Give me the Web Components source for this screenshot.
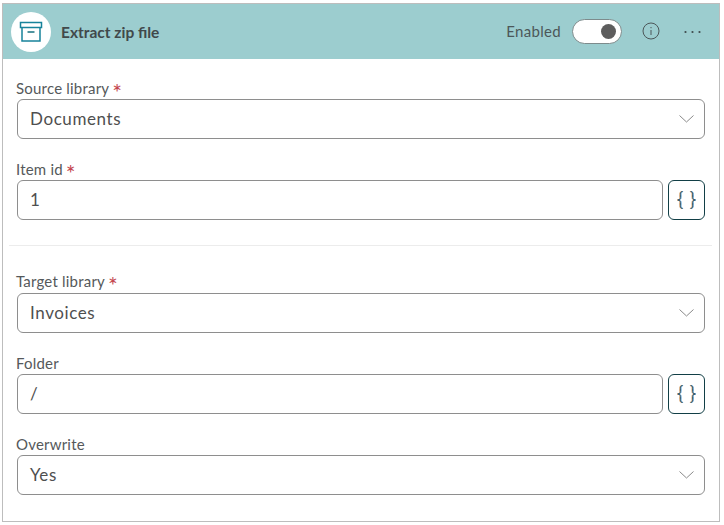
<!DOCTYPE html>
<html>
<head>
<meta charset="utf-8">
<style>
  html, body { margin: 0; background: #fff; }
  body { padding: 3px 0 0 2px; font-family: Lato, "Liberation Sans", sans-serif; color: #4a4a4a; }
</style>
</head>
<body>
<step-card title="Extract zip file">
  <form-field label="Source library" required style="--gap-top:20px"><select-box value="Documents"></select-box></form-field>
  <form-field label="Item id" required style="--gap-top:21px"><expr-input value="1"></expr-input></form-field>
  <field-divider></field-divider>
  <form-field label="Target library" required style="--gap-top:0px;--label-gap:1px"><select-box value="Invoices"></select-box></form-field>
  <form-field label="Folder" style="--gap-top:21px"><expr-input value="/"></expr-input></form-field>
  <form-field label="Overwrite" style="--gap-top:21px"><select-box value="Yes"></select-box></form-field>
</step-card>

<script>
class StepCard extends HTMLElement {
  constructor() {
    super();
    this.attachShadow({ mode: 'open' }).innerHTML = `
      <style>
        :host { display: block; width: 716px; height: 517px; border: 1px solid #bdbdbd; background: #fff; }
        header { height: 55px; background: #9ccdcf; display: flex; align-items: center; padding-left: 8px; padding-right: 18px; box-sizing: border-box; }
        .logo { width: 40px; height: 40px; border-radius: 50%; background: #fff; display: flex; align-items: center; justify-content: center; flex: none; }
        h1 { margin: 0 0 0 10px; font-size: 15.5px; font-weight: 700; color: #41494b; flex: 1; }
        .state { font-size: 15px; color: #4c5759; margin-right: 11px; letter-spacing: .3px; padding-bottom: 1px; }
        .toggle { width: 50px; height: 25px; box-sizing: border-box; border: 1px solid #7d8b8c; border-radius: 13px; background: #fff; display: flex; align-items: center; justify-content: flex-end; padding-right: 5px; }
        .knob { width: 15px; height: 15px; border-radius: 50%; background: #5d5d5d; }
        .info { margin-left: 20px; display: block; margin-top: -1px; }
        .more { margin-left: 24px; display: block; }
        main { padding: 0 13px; }
      </style>
      <header>
        <span class="logo">
          <svg width="24" height="22" viewBox="0 0 24 22" fill="none">
            <path d="M1.5 1.5H22.5V6.5H1.5Z" stroke="#17839b" stroke-width="1.5"/>
            <path d="M3 6.5V20H21V6.5" stroke="#17839b" stroke-width="1.5"/>
            <path d="M8.5 11H15.5" stroke="#16707f" stroke-width="1.5"/>
          </svg>
        </span>
        <h1></h1>
        <span class="state">Enabled</span>
        <span class="toggle"><span class="knob"></span></span>
        <svg class="info" width="18" height="18" viewBox="0 0 18 18" fill="none" stroke="#4c5759">
          <circle cx="9" cy="9" r="8" stroke-width="1"/>
          <path d="M9 8V13" stroke-width="1"/>
          <path d="M9 5V6.2" stroke-width="1"/>
        </svg>
        <svg class="more" width="17" height="4" viewBox="0 0 17 4" fill="#3f4a4c">
          <circle cx="1.5" cy="2" r="1.1"/><circle cx="8.5" cy="2" r="1.1"/><circle cx="15.5" cy="2" r="1.1"/>
        </svg>
      </header>
      <main><slot></slot></main>`;
  }
  connectedCallback() {
    this.shadowRoot.querySelector('h1').textContent = this.getAttribute('title');
    this.removeAttribute('title');
  }
}
customElements.define('step-card', StepCard);

class FormField extends HTMLElement {
  constructor() {
    super();
    this.attachShadow({ mode: 'open' }).innerHTML = `
      <style>
        :host { display: block; padding-top: var(--gap-top, 20px); }
        label { display: block; height: 20px; margin-bottom: var(--label-gap, 0); line-height: 18px; font-size: 15px; color: #55595b; letter-spacing: .2px; }
        .req { color: #c4474f; margin-left: 3px; font-size: 23px; line-height: 14px; vertical-align: -7px; }
      </style>
      <label></label>
      <div><slot></slot></div>`;
  }
  connectedCallback() {
    const label = this.shadowRoot.querySelector('label');
    label.textContent = this.getAttribute('label');
    if (this.hasAttribute('required')) {
      const star = document.createElement('span');
      star.className = 'req';
      star.textContent = '*';
      label.appendChild(star);
    }
  }
}
customElements.define('form-field', FormField);

const boxCss = `
  .box { height: 40px; box-sizing: border-box; border: 1px solid #8e8e8e; border-radius: 6px; background: #fff;
         display: flex; align-items: center; padding: 0 10px 2px 12px; font-size: 17px; color: #4f4f4f; letter-spacing: .6px; }
`;

class SelectBox extends HTMLElement {
  constructor() {
    super();
    this.attachShadow({ mode: 'open' }).innerHTML = `
      <style>
        :host { display: block; margin-left: 1px; width: 688px; }
        ${boxCss}
        span { flex: 1; }
        svg { margin-top: 2px; }
      </style>
      <div class="box"><span></span>
        <svg width="15" height="8" viewBox="0 0 15 8" fill="none" stroke="#8a8a8a" stroke-width="1"><path d="M.5 .5L7.5 7L14.5 .5"/></svg>
      </div>`;
  }
  connectedCallback() {
    this.shadowRoot.querySelector('span').textContent = this.getAttribute('value');
  }
}
customElements.define('select-box', SelectBox);

const braces = 'M5.5 .6C3.6 .6 3.4 1.6 3.4 3.2V6.6C3.4 7.9 2.6 9 .8 9C2.6 9 3.4 10.1 3.4 11.4V14.8C3.4 16.4 3.6 17.4 5.5 17.4M13.5 .6C15.4 .6 15.6 1.6 15.6 3.2V6.6C15.6 7.9 16.4 9 18.2 9C16.4 9 15.6 10.1 15.6 11.4V14.8C15.6 16.4 15.4 17.4 13.5 17.4';

class ExprInput extends HTMLElement {
  constructor() {
    super();
    this.attachShadow({ mode: 'open' }).innerHTML = `
      <style>
        :host { display: flex; gap: 5px; margin-left: 1px; width: 688px; }
        ${boxCss}
        .box { flex: 1; }
        button { width: 37px; height: 40px; padding: 0; box-sizing: border-box; border: 1px solid #123f46; border-radius: 6px; background: #fff;
                 display: flex; align-items: center; justify-content: center; }
      </style>
      <div class="box"><span></span></div>
      <button>
        <svg width="19" height="18" viewBox="0 0 19 18" fill="none" stroke-width="1">
          <path d="${braces}" stroke="#e0a060" transform="translate(-.6 0)"/>
          <path d="${braces}" stroke="#3f95d0" transform="translate(.6 0)"/>
          <path d="${braces}" stroke="#1f3f55" stroke-width=".8"/>
        </svg>
      </button>`;
  }
  connectedCallback() {
    this.shadowRoot.querySelector('span').textContent = this.getAttribute('value');
  }
}
customElements.define('expr-input', ExprInput);

class FieldDivider extends HTMLElement {
  constructor() {
    super();
    this.attachShadow({ mode: 'open' }).innerHTML = `
      <style>
        :host { display: block; margin: 25px -6px 26px -7px; border-top: 1px solid #ececec; }
      </style>`;
  }
}
customElements.define('field-divider', FieldDivider);
</script>
</body>
</html>
